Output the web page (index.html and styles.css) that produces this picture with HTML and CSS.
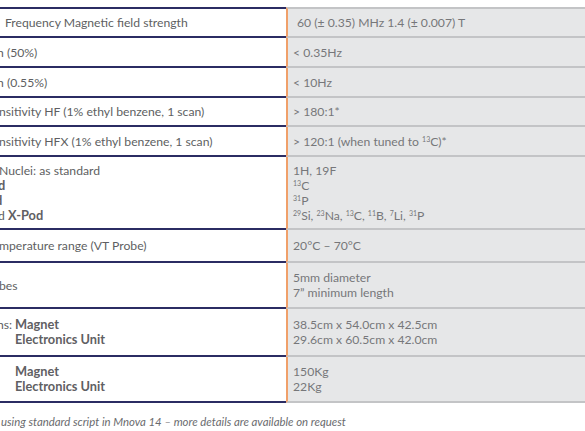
FILE: index.html
```html
<!DOCTYPE html>
<html>
<head>
<meta charset="utf-8">
<link rel="stylesheet" href="styles.css">
</head>
<body>
<div class="page">
  <div class="spec">
    <div class="row r1">
      <div class="k"><span class="t">Frequency Magnetic field strength</span></div>
      <div class="v"><span>60 (± 0.35) MHz 1.4 (± 0.007) T</span></div>
    </div>
    <div class="row r2">
      <div class="k"><span class="t cut">n (50%)</span></div>
      <div class="v"><span>&lt; 0.35Hz</span></div>
    </div>
    <div class="row r3">
      <div class="k"><span class="t cut">n (0.55%)</span></div>
      <div class="v"><span>&lt; 10Hz</span></div>
    </div>
    <div class="row r4">
      <div class="k"><span class="t cut1">nsitivity HF (1% ethyl benzene, 1 scan)</span></div>
      <div class="v"><span>&gt; 180:1*</span></div>
    </div>
    <div class="row r5">
      <div class="k"><span class="t cut1">nsitivity HFX (1% ethyl benzene, 1 scan)</span></div>
      <div class="v"><span>&gt; 120:1 (when tuned to <sup>13</sup>C)*</span></div>
    </div>
    <div class="row r6">
      <div class="k">
        <span class="t cut1">Nuclei: as standard</span>
        <span class="t cut2"><b>d</b></span>
        <span class="t cut3"><b>d</b></span>
        <span class="t cut2">d <b>X-Pod</b></span>
      </div>
      <div class="v">
        <span>1H, 19F</span>
        <span><sup>13</sup>C</span>
        <span><sup>31</sup>P</span>
        <span><sup>29</sup>Si, <sup>23</sup>Na, <sup>13</sup>C, <sup>11</sup>B, <sup>7</sup>Li, <sup>31</sup>P</span>
      </div>
    </div>
    <div class="row r7">
      <div class="k"><span class="t cut1">mperature range (VT Probe)</span></div>
      <div class="v"><span>20°C – 70°C</span></div>
    </div>
    <div class="row r8">
      <div class="k"><span class="t cut1">bes</span></div>
      <div class="v"><span>5mm diameter</span><span>7” minimum length</span></div>
    </div>
    <div class="row r9">
      <div class="k">
        <div class="pair">
          <span class="lab"><span>ns:</span></span>
          <span class="sub"><b>Magnet</b><b>Electronics Unit</b></span>
        </div>
      </div>
      <div class="v"><span>38.5cm x 54.0cm x 42.5cm</span><span>29.6cm x 60.5cm x 42.0cm</span></div>
    </div>
    <div class="row r10">
      <div class="k">
        <div class="pair">
          <span class="lab"></span>
          <span class="sub"><b>Magnet</b><b>Electronics Unit</b></span>
        </div>
      </div>
      <div class="v"><span>150Kg</span><span>22Kg</span></div>
    </div>
  </div>
  <p class="note">using standard script in Mnova 14 – more details are available on request</p>
</div>
</body>
</html>
```

FILE: styles.css
```css
* { box-sizing: border-box; }
html, body { margin: 0; padding: 0; background: #ffffff; }
body {
  font-family: "Lato", "Open Sans", sans-serif;
  font-size: 12.2px;
  line-height: 15px;
  color: #5e5f62;
  overflow: hidden;
}
.page { padding-top: 7px; width: 585px; }
.spec { display: flex; flex-direction: column; }
.row {
  display: grid;
  grid-template-columns: 286px 1fr;
}
.k {
  border-bottom: 2px solid #2b2c63;
  overflow: hidden;
  display: flex;
  flex-direction: column;
  justify-content: center;
  white-space: nowrap;
}
.v {
  background: #e6e7e8;
  border-left: 2px solid #f0a06a;
  border-bottom: 2px solid #c3c4c6;
  color: #76777a;
  padding-left: 5px;
  display: flex;
  flex-direction: column;
  justify-content: center;
  white-space: nowrap;
}
.r1 .k { border-top: 2px solid #2b2c63; padding-left: 5px; }
.r1 .v { border-top: 2px solid #c3c4c6; padding-left: 9px; }
.t { display: block; }
.cut { margin-left: -3px; }
.cut1 { margin-left: -1px; }
.cut2 { margin-left: -2px; }
.cut3 { margin-left: -5px; }
b { font-weight: 700; color: #5f6063; font-size: 12.8px; }
sup { font-size: 7px; line-height: 0; vertical-align: 4px; }
.r1 { height: 31px; }
.r2, .r3 { height: 30px; }
.r4 { height: 29px; }
.r5 { height: 30px; }
.r6 { height: 73px; }
.r7 { height: 33px; }
.r8 { height: 46px; }
.r9 { height: 48px; }
.r10 { height: 46px; }
.pair { display: flex; align-items: flex-start; }
.lab {
  width: 15px;
  flex: none;
  display: flex;
  justify-content: flex-end;
  padding-right: 3px;
}
.sub { display: flex; flex-direction: column; }
.note {
  margin: 12px 0 0 0;
  font-style: italic;
  font-size: 11.4px;
  line-height: 14px;
  color: #6a6b6e;
  padding-left: 1px;
}
```
